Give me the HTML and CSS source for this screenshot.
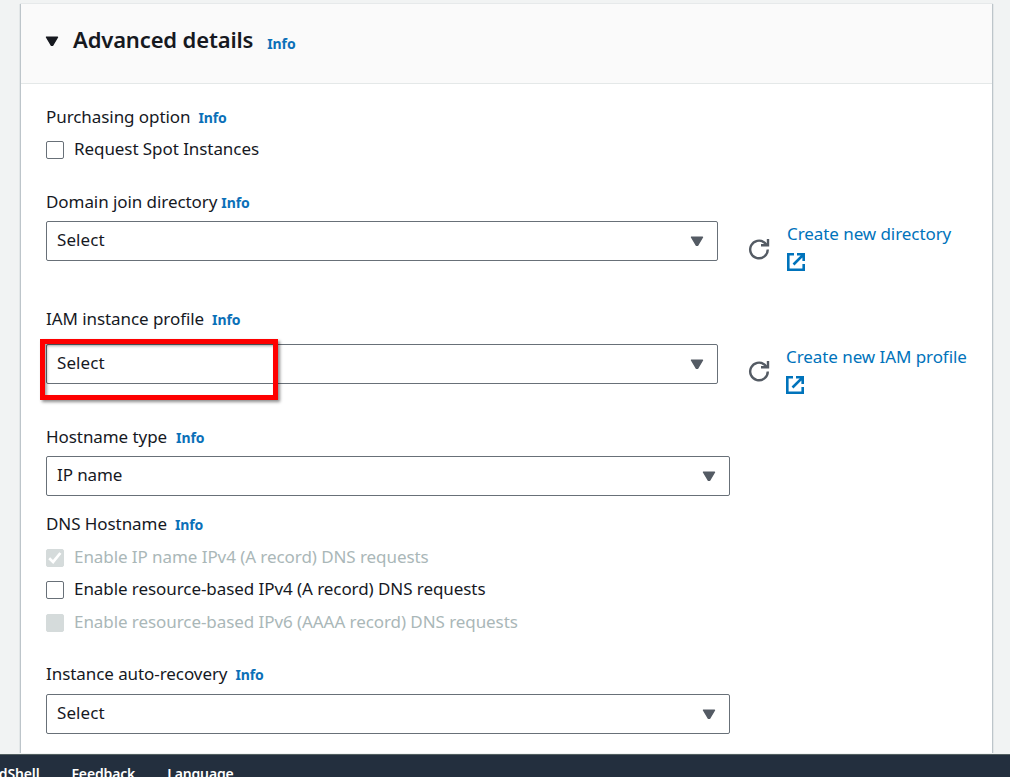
FILE: index.html
```
<!DOCTYPE html>
<html lang="en">
<head>
<meta charset="utf-8">
<title>Launch an instance</title>
<link rel="stylesheet" href="styles.css">
</head>
<body>
<svg class="defs" width="0" height="0" aria-hidden="true">
  <symbol id="caret" viewBox="0 0 14 11"><path d="M1.5 1.2h11L7.6 9.4H6.4z" fill="currentColor" stroke="currentColor" stroke-width="1.4" stroke-linejoin="round"/></symbol>
  <symbol id="refresh" viewBox="0 0 22 22"><path d="M19.8 11.5a8.8 8.8 0 1 1-3.2-6.8L19 7" fill="none" stroke="currentColor" stroke-width="2.4"/><path d="M20 1v6.2h-7" fill="none" stroke="currentColor" stroke-width="2.4"/></symbol>
  <symbol id="external" viewBox="0 0 18 18"><path d="M7 1.3H1.3v15.4h15.4V11M10 1.3h6.7V8M16.2 1.8L6.5 11.5" fill="none" stroke="currentColor" stroke-width="2.6"/></symbol>
</svg>
<div class="page">
  <main class="card">
    <header class="card-header">
      <svg class="toggle"><use href="#caret"/></svg>
      <h2 class="title">Advanced details</h2>
      <a class="info">Info</a>
    </header>
    <div class="card-body">
      <section class="field">
        <div class="label">Purchasing option<a class="info">Info</a></div>
        <div class="check-row spot"><span class="box"></span>Request Spot Instances</div>
      </section>

      <section class="field directory">
        <div class="label tight">Domain join directory<a class="info">Info</a></div>
        <div class="control">
          <div class="select">Select<svg class="caret"><use href="#caret"/></svg></div>
          <svg class="refresh"><use href="#refresh"/></svg>
          <a class="link">Create new directory<svg class="external"><use href="#external"/></svg></a>
        </div>
      </section>

      <section class="field profile">
        <div class="label">IAM instance profile<a class="info">Info</a></div>
        <div class="control">
          <div class="select">Select<svg class="caret"><use href="#caret"/></svg></div>
          <svg class="refresh"><use href="#refresh"/></svg>
          <a class="link">Create new IAM profile<svg class="external"><use href="#external"/></svg></a>
          <div class="highlight"></div>
        </div>
      </section>

      <section class="field hostname">
        <div class="label">Hostname type<a class="info">Info</a></div>
        <div class="select wide">IP name<svg class="caret"><use href="#caret"/></svg></div>
      </section>

      <section class="field dns">
        <div class="label">DNS Hostname<a class="info">Info</a></div>
        <div class="checks">
          <div class="check-row disabled"><span class="box"><svg class="tick" viewBox="0 0 18 18"><path d="M3.2 9.2l3.9 3.7L14.4 4" fill="none" stroke="#fff" stroke-width="2.7"/></svg></span>Enable IP name IPv4 (A record) DNS requests</div>
          <div class="check-row"><span class="box"></span>Enable resource-based IPv4 (A record) DNS requests</div>
          <div class="check-row disabled"><span class="box"></span>Enable resource-based IPv6 (AAAA record) DNS requests</div>
        </div>
      </section>

      <section class="field recovery">
        <div class="label">Instance auto-recovery<a class="info">Info</a></div>
        <div class="select wide">Select<svg class="caret"><use href="#caret"/></svg></div>
      </section>
    </div>
  </main>
  <footer class="footer">
    <a class="foot shell">CloudShell</a>
    <a class="foot feedback">Feedback</a>
    <a class="foot">Language</a>
  </footer>
</div>
</body>
</html>
```
FILE: styles.css
```
* { box-sizing: border-box; }

body {
  margin: 0;
  background: #f1f3f3;
  color: #16191f;
  font: 17px/28px "Noto Sans", "Open Sans", sans-serif;
  letter-spacing: -0.07px;
}

.defs { position: absolute; }
svg { display: block; flex: none; }

.page {
  display: flex;
  flex-direction: column;
  height: 777px;
  padding-top: 4px;
  overflow: hidden;
}

.card {
  flex: none;
  width: 973px;
  height: 749px;
  margin-left: 20px;
  background: #fff;
  border: solid #bdc5ca;
  border-width: 0 1px;
  box-shadow: -1px 0 0 #e3e7e8, 1px 0 0 #e3e7e8, 0 -1px 0 #e6e9ea;
}

.card-header {
  display: flex;
  height: 80px;
  padding: 21px 25px 0;
  background: #fafafa;
  border-bottom: 1px solid #e4e8e8;
}

.toggle { width: 14px; height: 11px; margin: 11px 14px 0 -1px; }

.title {
  margin: 0 14px 0 0;
  font-size: 22px;
  font-weight: 600;
  line-height: 28px;
  letter-spacing: -0.15px;
}

.info {
  color: #0b70b8;
  font-size: 14px;
  font-weight: 700;
  letter-spacing: -0.1px;
}

.card-header .info { padding-top: 5px; }

.card-body { padding: 19px 25px 0; }

.label { display: flex; height: 28px; }
.label .info { margin-left: 8px; padding-top: 1px; }
.label.tight .info { margin-left: 4px; }
.hostname .info { margin-left: 9px; }

.check-row { display: flex; height: 28px; }
.spot { margin-top: 4px; }

.box {
  flex: none;
  width: 18px;
  height: 18px;
  margin: 6px 10px 0 0;
  border: 1px solid #687078;
  border-radius: 2px;
}

.disabled { color: #aab7b8; }
.disabled .box { background: #d5dbdb; border-color: #d5dbdb; }
.tick { width: 18px; height: 18px; margin: -1px; }

.directory { margin-top: 25px; }
.profile { margin-top: 44px; }
.hostname { margin-top: 39px; }
.dns { margin-top: 14px; }
.recovery { margin-top: 24px; }

.control { position: relative; display: flex; height: 40px; margin-top: 5px; }
.profile .control { margin-top: 11px; }

.select {
  display: flex;
  flex: none;
  justify-content: space-between;
  width: 672px;
  height: 40px;
  padding: 4px 13px 0 10px;
  border: 1px solid #687078;
  border-radius: 2px;
  letter-spacing: 0.1px;
}

.select.wide { width: 684px; margin-top: 5px; }
.hostname .select { letter-spacing: -0.1px; }
.recovery .select.wide { margin-top: 6px; }

.caret { width: 14px; height: 11px; margin-top: 10px; color: #545b64; }

.refresh { width: 22px; height: 22px; margin: 17px 0 0 30px; color: #545b64; }
.profile .refresh { margin-top: 16px; }

.link {
  display: flex;
  flex-direction: column;
  flex: none;
  height: 56px;
  margin: -1px 0 0 17px;
  color: #0073bb;
}

.profile .link { margin-left: 16px; }

.external { width: 18px; height: 18px; margin-top: 5px; }

/* Callout frame drawn over the profile selector */
.highlight {
  position: absolute;
  top: -5px;
  left: -6px;
  width: 238px;
  height: 61px;
  border: 5px solid #fe0000;
  box-shadow: 2px 2px 3px rgba(0, 0, 0, .45), inset 2px 2px 3px rgba(0, 0, 0, .35);
}

.checks { display: flex; flex-direction: column; gap: 4px; margin-top: 5px; }
.check-row:last-child:not(.spot) { margin-top: 1px; }

.footer {
  display: flex;
  flex: none;
  height: 24px;
  margin-top: 1px;
  padding-top: 5px;
  gap: 32px;
  background: #232f3e;
  border-top: 1px solid #536061;
  color: #fff;
  font-size: 14px;
  font-weight: 600;
}

.foot { height: 28px; flex: none; letter-spacing: -0.15px; }
.shell { margin-left: -31px; }
```
